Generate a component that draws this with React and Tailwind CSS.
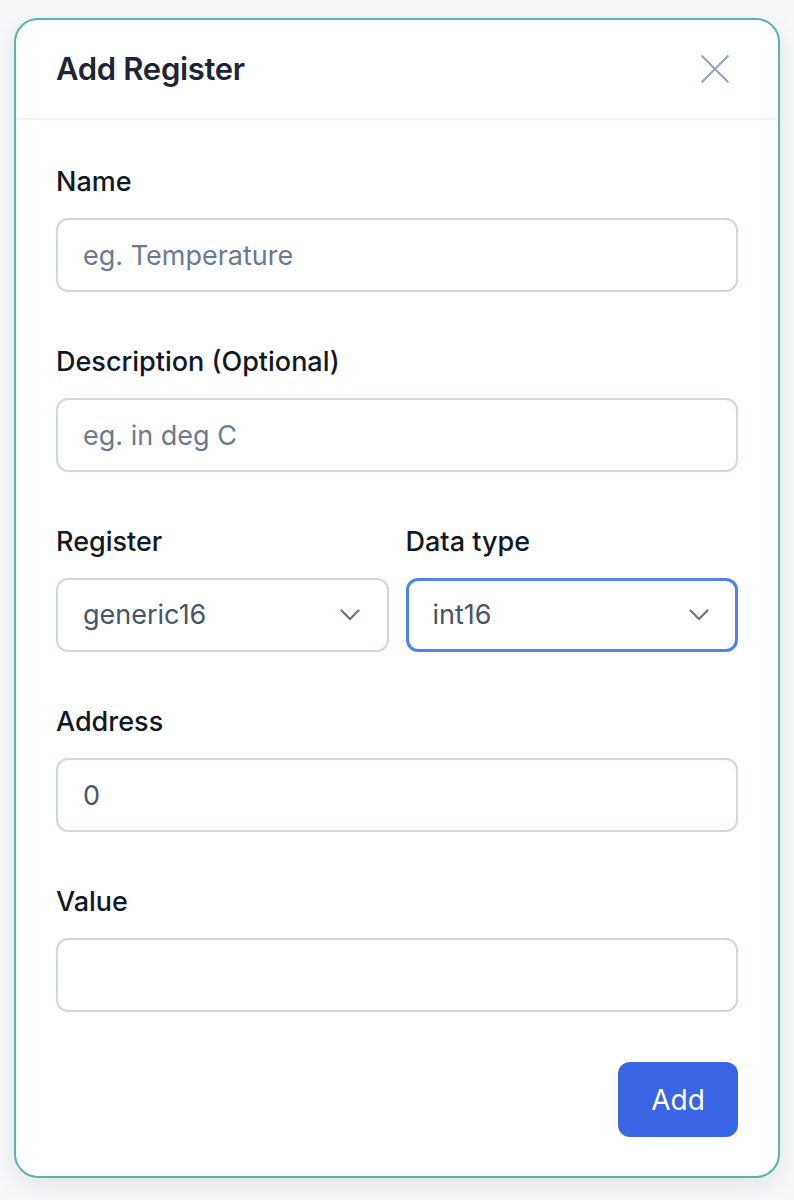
import React from "react";

const Label = ({ children }) => (
  <label className="block text-[27px] leading-[36px] font-medium text-[#111827] mb-[18px]">
    {children}
  </label>
);

const TextInput = ({ placeholder, value }) => (
  <input
    type="text"
    defaultValue={value}
    placeholder={placeholder}
    className="block w-full h-[74px] rounded-[12px] border-2 border-[#cfd7e3] bg-white px-[25px] text-[27px] text-[#475569] placeholder:text-[#6b7a90] outline-none"
  />
);

const Chevron = () => (
  <svg width="20" height="12" viewBox="0 0 20 12" fill="none" stroke="#64748b" strokeWidth="2.2" strokeLinecap="round" strokeLinejoin="round">
    <path d="M1.5 1.5l8.5 8.5 8.5-8.5" />
  </svg>
);

const SelectBox = ({ value, focused }) => (
  <div
    className={
      focused
        ? "flex items-center justify-between h-[74px] rounded-[12px] border-[3px] border-[#5083ea] bg-white pl-[24px] pr-[26px]"
        : "flex items-center justify-between h-[74px] rounded-[12px] border-2 border-[#cfd7e3] bg-white pl-[25px] pr-[27px]"
    }
  >
    <span className="text-[27px] text-[#475569]">{value}</span>
    <Chevron />
  </div>
);

export default function App() {
  return (
    <div
      className="min-h-[1200px] bg-[#f6f7f9] px-[14px] pt-[18px]"
      style={{ fontFamily: "Inter, 'Noto Sans', sans-serif" }}
    >
      <div className="h-[1160px] rounded-[24px] border-2 border-[#58b6a2] bg-white shadow-[0_8px_24px_rgba(15,23,42,0.08)] overflow-hidden">
        {/* Header */}
        <div className="flex items-center justify-between h-[100px] border-b-2 border-[#f1f4f8] pl-[40px] pr-[46px]">
          <h2 className="text-[31px] font-semibold text-[#1e2535] tracking-[-0.01em]">
            Add Register
          </h2>
          <svg width="34" height="34" viewBox="0 0 24 24" fill="none" stroke="#94a3b8" strokeWidth="1.5" strokeLinecap="round">
            <path d="M3 3l18 18M21 3L3 21" />
          </svg>
        </div>

        {/* Body */}
        <div className="px-[40px] pt-[44px]">
          <div className="mb-[52px]">
            <Label>Name</Label>
            <TextInput placeholder="eg. Temperature" />
          </div>
          <div className="mb-[52px]">
            <Label>Description (Optional)</Label>
            <TextInput placeholder="eg. in deg C" />
          </div>
          <div className="grid grid-cols-2 gap-[17px] mb-[52px]">
            <div>
              <Label>Register</Label>
              <SelectBox value="generic16" />
            </div>
            <div>
              <Label>Data type</Label>
              <SelectBox value="int16" focused />
            </div>
          </div>
          <div className="mb-[52px]">
            <Label>Address</Label>
            <TextInput value="0" />
          </div>
          <div className="mb-[50px]">
            <Label>Value</Label>
            <TextInput />
          </div>
          <div className="flex justify-end">
            <button className="h-[75px] w-[120px] rounded-[12px] bg-[#3964e3] text-[28px] text-white">
              Add
            </button>
          </div>
        </div>
      </div>
    </div>
  );
}
